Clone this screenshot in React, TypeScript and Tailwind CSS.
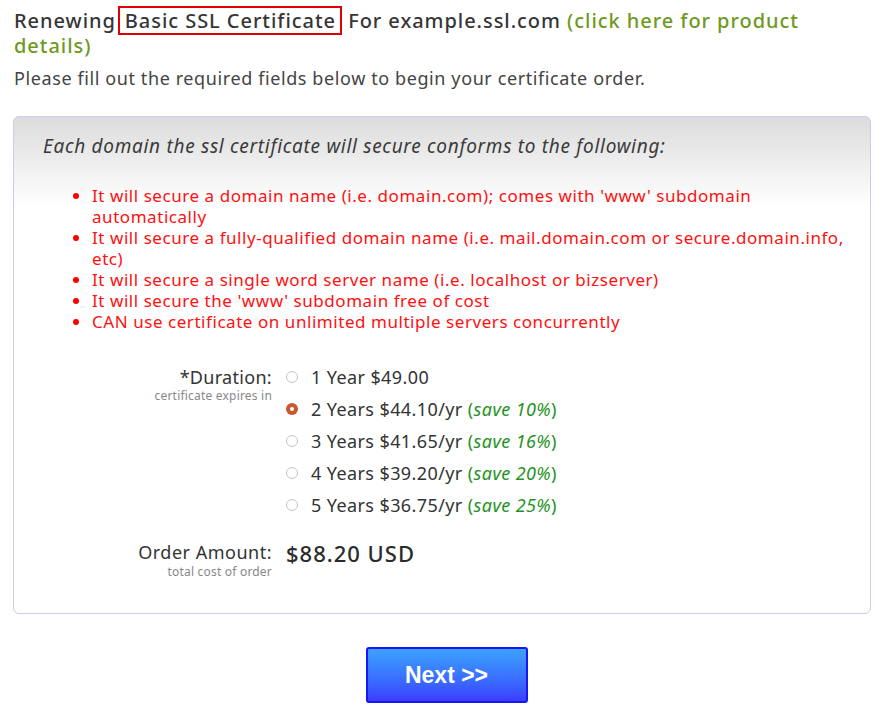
import React, { useState } from "react";

const font = { fontFamily: '"Noto Sans", "Open Sans", sans-serif' };

const durations = [
  { label: "1 Year $49.00", save: "" },
  { label: "2 Years $44.10/yr", save: "save 10%" },
  { label: "3 Years $41.65/yr", save: "save 16%" },
  { label: "4 Years $39.20/yr", save: "save 20%" },
  { label: "5 Years $36.75/yr", save: "save 25%" },
];

const rules = [
  "It will secure a domain name (i.e. domain.com); comes with 'www' subdomain automatically",
  "It will secure a fully-qualified domain name (i.e. mail.domain.com or secure.domain.info, etc)",
  "It will secure a single word server name (i.e. localhost or bizserver)",
  "It will secure the 'www' subdomain free of cost",
  "CAN use certificate on unlimited multiple servers concurrently",
];

const Radio: React.FC<{ checked: boolean }> = ({ checked }) =>
  checked ? (
    <span className="flex h-[12px] w-[12px] shrink-0 items-center justify-center rounded-full bg-[#c9582e]">
      <span className="h-[4px] w-[4px] rounded-full bg-white" />
    </span>
  ) : (
    <span className="h-[12px] w-[12px] shrink-0 rounded-full border border-[#c4c4c4] bg-white" />
  );

export default function App() {
  const [selected, setSelected] = useState(1);

  return (
    <div className="min-h-[717px] w-[885px] bg-white px-[14px] pt-[8px] text-[#333]" style={font}>
      <h1 className="text-[20px] leading-[25px] font-medium tracking-[0.95px] text-[#363636]">
        Renewing
        <span className="-my-[2px] ml-[2px] inline-block border-2 border-[#e00000] pr-[4px] pl-[5px] leading-[25px]">
          Basic SSL Certificate
        </span>{" "}
        For example.ssl.com{" "}
        <a className="text-[#6e9a22]">
          <span>(click here for product</span> <span>details)</span>
        </a>
      </h1>
      <p className="mt-[8px] text-[18px] leading-[24px] tracking-[0.6px] text-[#444]">
        Please fill out the required fields below to begin your certificate order.
      </p>

      <div className="mt-[26px] -ml-[1px] rounded-[6px] border border-[#cbcbf5] bg-gradient-to-b from-[#dcdcdc] via-white via-[18%] to-white pb-[34px]">
        <p className="pt-[16px] pl-[29px] text-[19px] leading-[26px] tracking-[0.7px] italic text-[#3a3a3a]">
          Each domain the ssl certificate will secure conforms to the following:
        </p>
        <ul className="mt-[26px] list-disc pl-[78px] pr-[20px] text-[17px] leading-[21px] tracking-[0.55px] text-[#ff1010] marker:text-[#ff0000]">
          {rules.map((r) => (
            <li key={r}>{r}</li>
          ))}
        </ul>

        <div className="mt-[34px] grid grid-cols-[258px_1fr] gap-x-[14px]">
          <div className="text-right">
            <div className="text-[18px] leading-[22px] tracking-[0.3px] text-[#333]">*Duration:</div>
            <div className="text-[12px] leading-[16px] tracking-[0.2px] text-[#888]">certificate expires in</div>
          </div>
          <div className="flex flex-col gap-[10px]">
            {durations.map((d, i) => (
              <label
                key={d.label}
                className="flex h-[22px] cursor-pointer items-center gap-[13px] text-[18px] tracking-[0.4px] text-[#333]"
                onClick={() => setSelected(i)}
              >
                <Radio checked={selected === i} />
                <span>
                  {d.label}
                  {d.save && (
                    <span className="text-[#1f931f]">
                      {" "}(<i>{d.save}</i>)
                    </span>
                  )}
                </span>
              </label>
            ))}
          </div>

          <div className="mt-[25px] text-right">
            <div className="text-[18px] leading-[22px] tracking-[0.5px] text-[#333]">Order Amount:</div>
            <div className="mt-[1px] text-[12px] leading-[15px] tracking-[0.2px] text-[#888]">total cost of order</div>
          </div>
          <div className="mt-[25px] text-[22px] leading-[24px] font-medium tracking-[1px] text-[#2b2b2b]">
            $88.20 USD
          </div>
        </div>
      </div>

      <div className="mt-[33px] flex justify-center pl-[8px]">
        <button
          className="h-[56px] w-[162px] rounded-[3px] border-2 border-[#1717f5] bg-gradient-to-b from-[#3ea0ff] to-[#3d3dff] text-[23px] font-bold text-white"
          style={{ fontFamily: '"Liberation Sans", Arial, sans-serif' }}
        >
          Next &gt;&gt;
        </button>
      </div>
    </div>
  );
}
